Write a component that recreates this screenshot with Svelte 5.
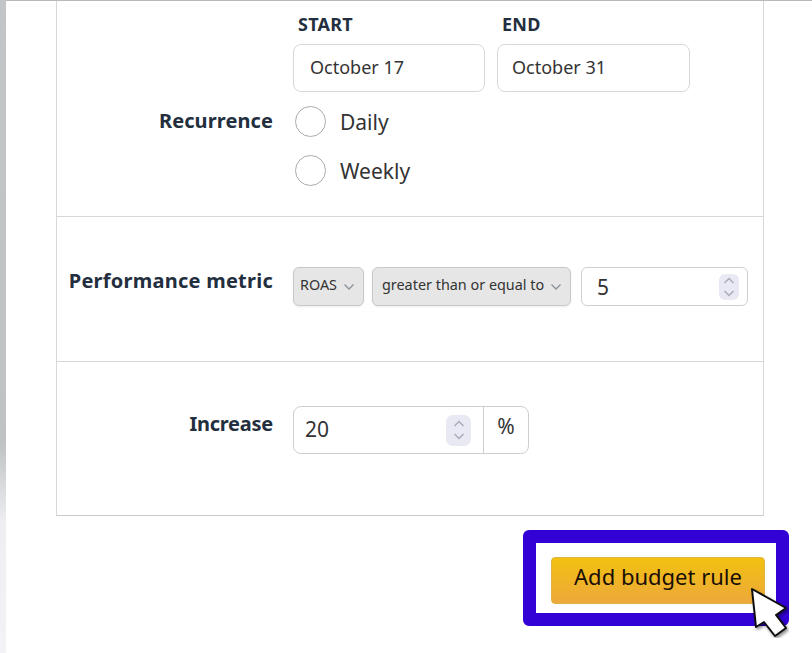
<script>
	let recurrence = $state('');
	let metric = $state('5');
	let increase = $state('20');
</script>

{#snippet spinner()}
	<span class="spinner">
		<svg width="14" height="28" viewBox="0 0 14 28" fill="none" stroke="#a9adb8" stroke-width="1.5">
			<path d="M2.5 10 L7 5.5 L11.5 10" />
			<path d="M2.5 18 L7 22.5 L11.5 18" />
		</svg>
	</span>
{/snippet}

{#snippet chevron()}
	<svg class="chevron" width="12" height="8" viewBox="0 0 12 8" fill="none" stroke="#8b9096" stroke-width="1.3">
		<path d="M1.5 1.5 L6 6 L10.5 1.5" />
	</svg>
{/snippet}

<div class="page">
	<div class="strip"></div>
	<main class="content">
		<section class="panel">
			<div class="row schedule">
				<div class="dates">
					<label class="date">
						<span class="date-title">START</span>
						<span class="field start">October 17</span>
					</label>
					<label class="date">
						<span class="date-title">END</span>
						<span class="field end">October 31</span>
					</label>
				</div>
				<div class="recurrence">
					<span class="label">Recurrence</span>
					<div class="options">
						<label class="option"><input type="radio" bind:group={recurrence} value="daily" />Daily</label>
						<label class="option"><input type="radio" bind:group={recurrence} value="weekly" />Weekly</label>
					</div>
				</div>
			</div>

			<div class="row metric">
				<span class="label">Performance metric</span>
				<div class="controls">
					<button type="button" class="select roas">ROAS {@render chevron()}</button>
					<button type="button" class="select compare">greater than or equal to {@render chevron()}</button>
					<div class="number small">
						<span class="value">{metric}</span>
						{@render spinner()}
					</div>
				</div>
			</div>

			<div class="row increase">
				<span class="label">Increase</span>
				<div class="number wide">
					<span class="value">{increase}</span>
					{@render spinner()}
					<span class="unit">%</span>
				</div>
			</div>
		</section>

		<div class="actions">
			<div class="highlight">
				<button type="button" class="primary">Add budget rule</button>
				<svg class="cursor" width="40" height="52" viewBox="0 0 40 52">
					<defs>
						<filter id="cursor-shadow" x="-30%" y="-30%" width="170%" height="170%">
							<feDropShadow dx="1.5" dy="2" stdDeviation="1.5" flood-color="#000" flood-opacity="0.45" />
						</filter>
					</defs>
					<path
						d="M3 3 L37 22 L27 29 L37 42 L26 50 L15 36 L7 41 Z"
						fill="#fff"
						stroke="#111"
						stroke-width="2"
						stroke-linejoin="round"
						filter="url(#cursor-shadow)"
					/>
				</svg>
			</div>
		</div>
	</main>
</div>

<style>
	:global(body) {
		margin: 0;
		background: #fff;
	}

	.page {
		display: flex;
		width: 812px;
		height: 653px;
		overflow: hidden;
		font-family: "Noto Sans", "Liberation Sans", sans-serif;
		color: #232f3e;
	}

	.strip {
		width: 6px;
		flex: none;
		background: linear-gradient(to bottom, #c3c6c8 0%, #bfc3c3 68%, #eeeef3 80%, #f2f2f7 100%);
	}

	.content {
		flex: 1;
		border-top: 1px solid #b8babb;
		box-sizing: border-box;
		height: 653px;
	}

	.panel {
		width: 708px;
		margin-left: 50px;
		box-sizing: border-box;
		border-left: 1px solid #d5d7d8;
		border-right: 1px solid #d5d7d8;
		border-bottom: 1px solid #c8cacb;
	}

	.row {
		box-sizing: border-box;
		border-bottom: 1px solid #d5d7d8;
	}

	.row:last-child {
		border-bottom: none;
	}

	.label {
		width: 216px;
		flex: none;
		text-align: right;
		font-size: 20px;
		font-weight: 700;
		line-height: 26px;
		color: #232f3e;
		letter-spacing: 0.1px;
	}

	.schedule {
		height: 216px;
		padding-top: 12px;
	}

	.dates {
		display: flex;
		gap: 12px;
		margin-left: 236px;
	}

	.date {
		display: flex;
		flex-direction: column;
	}

	.date-title {
		font-size: 18px;
		font-weight: 700;
		line-height: 22px;
		margin: 0 0 9px 5px;
		color: #232f3e;
		letter-spacing: 0.25px;
	}

	.field {
		box-sizing: border-box;
		height: 48px;
		padding-left: 16px;
		border: 1px solid #d5d9d9;
		border-radius: 8px;
		font-size: 18px;
		line-height: 44px;
		color: #333;
	}

	.field.start {
		width: 192px;
	}

	.field.end {
		width: 193px;
		padding-left: 14px;
	}

	.recurrence {
		display: flex;
		gap: 22px;
		margin-top: 14px;
	}

	.recurrence .label {
		margin-top: 2px;
	}

	.options {
		display: flex;
		flex-direction: column;
		gap: 18px;
	}

	.option {
		display: flex;
		align-items: center;
		gap: 14px;
		height: 31px;
		font-size: 21px;
		color: #333;
	}

	.option input {
		appearance: none;
		width: 31px;
		height: 31px;
		margin: 0;
		border: 1px solid #a9acad;
		border-radius: 50%;
		background: #fff;
	}

	.metric {
		display: flex;
		align-items: flex-start;
		gap: 20px;
		height: 145px;
		padding-top: 50px;
	}

	.metric .label {
		letter-spacing: 0.25px;
		margin-top: 1px;
	}

	.controls {
		display: flex;
		gap: 8px;
	}

	.select {
		display: flex;
		align-items: center;
		gap: 6px;
		box-sizing: border-box;
		height: 39px;
		padding: 0 6px 5px 6px;
		border: 1px solid #c6c8c9;
		border-radius: 6px;
		background: #e6e6e6;
		box-shadow: 0 1px 2px rgba(0, 0, 0, 0.08);
		font-family: inherit;
		font-size: 14.4px;
		color: #333;
	}

	.select .chevron {
		margin-top: 5px;
	}

	.select.roas {
		width: 71px;
	}

	.select.compare {
		width: 199px;
		padding-left: 9px;
		margin-right: 2px;
	}

	.chevron {
		flex: none;
	}

	.number {
		display: flex;
		align-items: center;
		box-sizing: border-box;
		border: 1px solid #cdcfd0;
		border-radius: 6px;
		background: #fff;
		color: #333;
	}

	.number.small {
		width: 167px;
		height: 39px;
		padding: 0 8px 0 15px;
	}

	.number.wide {
		width: 236px;
		height: 48px;
		padding-left: 11px;
		border-radius: 8px;
	}

	.value {
		flex: 1;
		font-size: 21px;
	}

	.number.wide .value {
		padding-bottom: 2px;
	}

	.spinner {
		display: flex;
		align-items: center;
		justify-content: center;
		width: 20px;
		height: 26px;
		border-radius: 6px;
		background: #e9e9f3;
	}

	.number.wide .spinner {
		width: 25px;
		height: 31px;
		border-radius: 7px;
		margin-right: 12px;
	}

	.unit {
		align-self: stretch;
		width: 45px;
		flex: none;
		box-sizing: border-box;
		border-left: 1px solid #cdcfd0;
		text-align: center;
		font-size: 21px;
		line-height: 38px;
	}

	.increase {
		display: flex;
		gap: 20px;
		height: 153px;
		padding-top: 44px;
	}

	.increase .label {
		margin-top: 5px;
		letter-spacing: -0.25px;
	}

	.actions {
		display: flex;
		justify-content: flex-end;
		margin-top: 14px;
		padding-right: 23px;
	}

	.highlight {
		position: relative;
		box-sizing: border-box;
		width: 266px;
		height: 96px;
		padding: 14px 0 0 15px;
		border: 13px solid #3300d6;
		border-radius: 6px;
		background: #fff;
	}

	.primary {
		display: block;
		width: 214px;
		height: 47px;
		padding: 0 0 10px;
		border: 1px solid #e0b23e;
		border-radius: 4px;
		background: linear-gradient(to bottom, #f2c110, #eda83c);
		font-family: inherit;
		font-size: 22px;
		color: #1a0f05;
	}

	.cursor {
		position: absolute;
		left: 213px;
		top: 43px;
	}
</style>
